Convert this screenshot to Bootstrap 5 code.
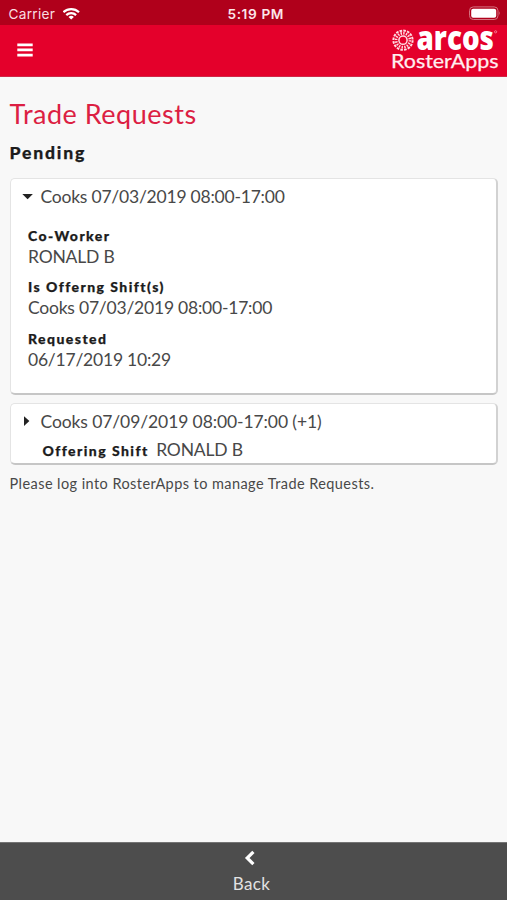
<!DOCTYPE html>
<html lang="en">
<head>
<meta charset="utf-8">
<meta name="viewport" content="width=device-width, initial-scale=1">
<title>Trade Requests</title>
<link href="https://cdn.jsdelivr.net/npm/bootstrap@5.3.0/dist/css/bootstrap.min.css" rel="stylesheet">
<style>
body{font-family:Lato,sans-serif;background:#f8f8f8;color:#484848;font-size:17.5px;line-height:21px;letter-spacing:-.22px;height:900px;overflow:hidden}
.status-bar{background:#b0001b;height:25px;font-family:Inter,sans-serif;font-size:13.7px;letter-spacing:.25px;color:#f9dde1;line-height:25px;padding:3px 6px 0 8.5px}
.status-side{flex:1 1 0}
.status-side svg{margin-top:-2px}
.status-time{font-weight:600;letter-spacing:.6px;color:#fbe6e9;margin:0 -1px 0 1px}
.app-bar{background:#e4002b;height:52px;border-bottom:1px solid #cf2848;padding:0 7px 0 17px}
.menu-btn{line-height:0;margin-top:-2px}
main{padding:20.5px 9.5px 0}
.page-title{color:#dc1f43;font-size:27px;line-height:32px;font-weight:400;letter-spacing:.5px;margin:0 0 12px}
.section-title{font-size:17.6px;line-height:22px;font-weight:900;letter-spacing:1.8px;color:#1c1c1c;margin:0 0 14px;-webkit-text-stroke:.25px #1c1c1c}
.request{border:1px solid #e4e4e4;border-right:2px solid #d2d2d2;border-bottom:2px solid #c6c6c6;border-radius:5px;background:#fff;color:inherit;padding:7px 0 0 11.5px}
.request-open{height:217px;margin-bottom:8.5px}
.request-closed{height:62px;margin-bottom:7.5px;padding-top:6.5px}
.request-closed .request-head{letter-spacing:-.1px}
.caret{width:12px;margin-right:6.5px}
.request-body{margin:19.5px 0 0 6px}
.request-body dd{margin:0 0 10.4px}
.request-label{font-size:14px;line-height:20px;font-weight:900;letter-spacing:1.45px;color:#1c1c1c;-webkit-text-stroke:.25px #1c1c1c}
.person{letter-spacing:-.2px}
.offer{margin:7.5px 0 0 20.5px}
.offer .request-label{margin-right:7.5px}
.note{font-size:14.5px;letter-spacing:.43px}
.bottom-bar{background:#4d4d4d;border-top:1px solid #747474;height:58px;color:#e2e2e2;font-size:17px;letter-spacing:.4px;padding:7px 4px 0 0}
.bottom-bar svg{margin:0 3px 7px 0}
</style>
<script src="https://cdn.jsdelivr.net/npm/bootstrap@5.3.0/dist/js/bootstrap.bundle.min.js"></script>
</head>
<body class="d-flex flex-column">
<div class="status-bar d-flex align-items-center flex-shrink-0">
  <div class="status-side d-flex align-items-center">
    <span>Carrier</span>
    <svg class="ms-2" width="18" height="13" viewBox="0.8 0 18 13" fill="none" stroke="#fff" stroke-width="2.2"><path d="M1.2 5.2a11.2 11.2 0 0 1 15.6 0M4.1 8.1a7 7 0 0 1 9.8 0"/><path d="M9 12.6 6.3 10a3.8 3.8 0 0 1 5.4 0z" fill="#fff" stroke="none"/></svg>
  </div>
  <span class="status-time">5:19 PM</span>
  <div class="status-side d-flex align-items-center justify-content-end">
    <svg width="32" height="15" viewBox="0.8 0 32 15"><rect x="1.3" y=".9" width="28.5" height="12.6" rx="3.8" fill="none" stroke="#d4717f" stroke-width="1"/><rect x="3" y="2.7" width="25" height="9" rx="2" fill="#fff"/><path d="M30.8 5.2q1.7 2 0 4z" fill="#d4717f"/></svg>
  </div>
</div>
<nav class="app-bar d-flex align-items-center justify-content-between flex-shrink-0">
  <a class="menu-btn" href="#" aria-label="Menu"><svg width="16" height="14" viewBox="0 0 16 14" fill="#fff"><path d="M.3.5h15.4v2.7H.3zM.3 5.6h15.4v2.7H.3zM.3 10.7h15.4v2.7H.3z"/></svg></a>
  <svg width="110" height="51" viewBox="0 0 110 51" role="img" overflow="visible">
    <g fill="none" stroke="#ffdde3" transform="translate(13 15.2)">
      <circle r="4.1" stroke-width="1.5"/>
      <circle r="6.9" stroke-width="2.6" stroke-dasharray="1.4 1.31"/>
      <circle r="9.6" stroke-width="2" stroke-dasharray="2.6 1.17"/>
    </g>
    <text x="26.5" y="25" font-family="Open Sans,sans-serif" font-weight="800" font-size="33" letter-spacing="0" fill="#fff" textLength="77.5" lengthAdjust="spacingAndGlyphs">arcos</text>
    <circle cx="105.6" cy="6.8" r="1.1" fill="none" stroke="#f7a0b0" stroke-width=".7"/>
    <text x="1" y="43.3" font-family="Lato,sans-serif" font-size="20" letter-spacing="0" fill="#ffeef0" stroke="#ffeef0" stroke-width=".25" textLength="107.5" lengthAdjust="spacingAndGlyphs">RosterApps</text>
  </svg>
</nav>
<main class="flex-grow-1">
  <h1 class="page-title">Trade Requests</h1>
  <h2 class="section-title">Pending</h2>
  <section class="card request request-open">
    <div class="request-head d-flex align-items-center">
      <svg class="caret" height="12" viewBox="0 0 12 12"><path d="M.3 4h10.6L5.6 9.3z" fill="#222"/></svg>
      <span>Cooks 07/03/2019 08:00-17:00</span>
    </div>
    <dl class="request-body">
      <dt class="request-label">Co-Worker</dt>
      <dd class="person">RONALD B</dd>
      <dt class="request-label">Is Offerng Shift(s)</dt>
      <dd>Cooks 07/03/2019 08:00-17:00</dd>
      <dt class="request-label">Requested</dt>
      <dd>06/17/2019 10:29</dd>
    </dl>
  </section>
  <section class="card request request-closed">
    <div class="request-head d-flex align-items-center">
      <svg class="caret" height="12" viewBox="0 0 12 12"><path d="M2 1.2v9.8l5.4-4.9z" fill="#222"/></svg>
      <span>Cooks 07/09/2019 08:00-17:00 (+1)</span>
    </div>
    <div class="offer d-flex align-items-baseline">
      <span class="request-label">Offering Shift</span>
      <span class="person">RONALD B</span>
    </div>
  </section>
  <p class="note mb-0">Please log into RosterApps to manage Trade Requests.</p>
</main>
<footer class="bottom-bar d-flex flex-column align-items-center flex-shrink-0">
  <svg width="12" height="16" viewBox="0 0 12 16" fill="none" stroke="#fff" stroke-width="3.2"><path d="M9.4 1.8 3.2 8l6.2 6.2"/></svg>
  <span>Back</span>
</footer>
</body>
</html>
